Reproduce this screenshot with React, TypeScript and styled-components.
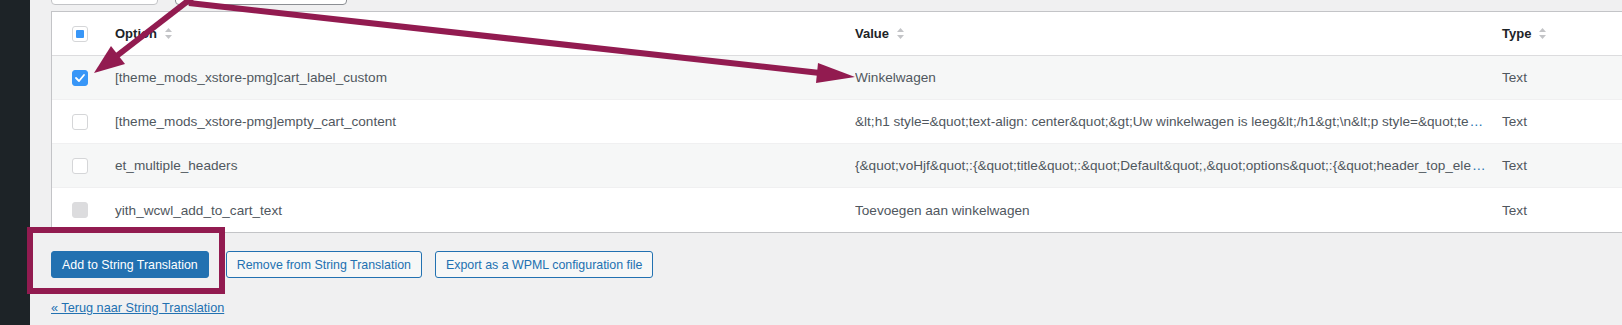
import styled, { createGlobalStyle } from 'styled-components';

const GlobalStyle = createGlobalStyle`
  html, body {
    margin: 0;
    padding: 0;
  }
  body {
    background: #f0f0f1;
    font-family: 'Liberation Sans', Arial, sans-serif;
    font-size: 13px;
    color: #50575e;
    overflow: hidden;
  }
`;

type CheckState = 'checked' | 'empty' | 'disabled';

type Row = {
  option: string;
  value: string;
  truncated?: boolean;
  type: string;
  state: CheckState;
  striped: boolean;
};

const rows: Row[] = [
  {
    option: '[theme_mods_xstore-pmg]cart_label_custom',
    value: 'Winkelwagen',
    type: 'Text',
    state: 'checked',
    striped: true,
  },
  {
    option: '[theme_mods_xstore-pmg]empty_cart_content',
    value:
      '&lt;h1 style=&quot;text-align: center&quot;&gt;Uw winkelwagen is leeg&lt;/h1&gt;\\n&lt;p style=&quot;te',
    truncated: true,
    type: 'Text',
    state: 'empty',
    striped: false,
  },
  {
    option: 'et_multiple_headers',
    value:
      '{&quot;voHjf&quot;:{&quot;title&quot;:&quot;Default&quot;,&quot;options&quot;:{&quot;header_top_ele',
    truncated: true,
    type: 'Text',
    state: 'empty',
    striped: true,
  },
  {
    option: 'yith_wcwl_add_to_cart_text',
    value: 'Toevoegen aan winkelwagen',
    type: 'Text',
    state: 'disabled',
    striped: false,
  },
];

const SortIcon = () => (
  <SortSvg width="7" height="11" viewBox="0 0 7 11">
    <path d="M3.5 0 L7 4 L0 4 Z" fill="#c3c4c7" />
    <path d="M3.5 11 L7 7 L0 7 Z" fill="#c3c4c7" />
  </SortSvg>
);

const Checkbox = ({ state }: { state: CheckState | 'mixed' }) => (
  <Box $state={state}>
    {state === 'checked' && (
      <svg width="12" height="10" viewBox="0 0 12 10">
        <path
          d="M2 5 L5 8 L10 2"
          fill="none"
          stroke="#fff"
          strokeWidth="1.8"
          strokeLinecap="round"
          strokeLinejoin="round"
        />
      </svg>
    )}
    {state === 'mixed' && <MixedDot />}
  </Box>
);

export default function App() {
  return (
    <>
      <GlobalStyle />
      <Page>
        <Sidebar />
        <Main>
          <TopBar>
            <FilterBox $w={107} />
            <FilterBox $w={172} $dark />
          </TopBar>
          <Table>
            <HeaderRow>
              <CheckCell>
                <Checkbox state="mixed" />
              </CheckCell>
              <HeadCell>
                Option <SortIcon />
              </HeadCell>
              <HeadCell>
                Value <SortIcon />
              </HeadCell>
              <HeadCell>
                Type <SortIcon />
              </HeadCell>
            </HeaderRow>
            {rows.map((r) => (
              <BodyRow key={r.option} $striped={r.striped}>
                <CheckCell>
                  <Checkbox state={r.state} />
                </CheckCell>
                <Cell>{r.option}</Cell>
                <Cell>
                  <ValueText>{r.value}</ValueText>
                  {r.truncated && <More>…</More>}
                </Cell>
                <Cell>{r.type}</Cell>
              </BodyRow>
            ))}
          </Table>
          <Actions>
            <Button $primary>Add to String Translation</Button>
            <Button>Remove from String Translation</Button>
            <Button>Export as a WPML configuration file</Button>
          </Actions>
          <BackLink href="#">« Terug naar String Translation</BackLink>
        </Main>
        <Highlight />
        <Arrows width="1622" height="325" viewBox="0 0 1622 325">
          <line x1="193" y1="-3" x2="116" y2="56.5" stroke="#921b50" strokeWidth="6" />
          <polygon points="94,73 125,64 111,46" fill="#921b50" />
          <line x1="189" y1="3" x2="820" y2="73" stroke="#921b50" strokeWidth="6" />
          <polygon points="855,77 816,83 818,63" fill="#921b50" />
        </Arrows>
      </Page>
    </>
  );
}

const Page = styled.div`
  position: relative;
  display: flex;
  height: 325px;
  overflow: hidden;
`;

const Sidebar = styled.div`
  width: 30px;
  flex-shrink: 0;
  background: #1d2327;
`;

const Main = styled.div`
  flex: 1;
  min-width: 0;
  padding-left: 21px;
`;

const TopBar = styled.div`
  display: flex;
  gap: 17px;
  height: 30px;
  margin-top: -25px;
`;

const FilterBox = styled.div<{ $w: number; $dark?: boolean }>`
  width: ${(p) => p.$w}px;
  height: 30px;
  box-sizing: border-box;
  background: #fff;
  border: 1px solid ${(p) => (p.$dark ? '#8c8f94' : '#c3c4c7')};
  border-radius: 4px;
`;

const Table = styled.div`
  margin-top: 6px;
  margin-right: -20px;
  background: #fff;
  border: 1px solid #c3c4c7;
`;

const gridCols = '63px 740px 647px 1fr';

const HeaderRow = styled.div`
  display: grid;
  grid-template-columns: ${gridCols};
  height: 44px;
  box-sizing: border-box;
  border-bottom: 1px solid #dcdcde;
  align-items: center;
`;

const BodyRow = styled.div<{ $striped: boolean }>`
  display: grid;
  grid-template-columns: ${gridCols};
  height: 44px;
  box-sizing: border-box;
  align-items: center;
  font-size: 13.6px;
  background: ${(p) => (p.$striped ? '#f6f7f7' : '#fff')};
  border-bottom: 1px solid #f0f0f1;
  &:last-child {
    border-bottom: none;
  }
`;

const CheckCell = styled.div`
  padding-left: 20px;
  display: flex;
  align-items: center;
`;

const HeadCell = styled.div`
  display: flex;
  align-items: center;
  gap: 8px;
  color: #1d2327;
  font-weight: 600;
`;

const Cell = styled.div`
  display: flex;
  align-items: center;
  white-space: nowrap;
  min-width: 0;
`;

const ValueText = styled.span`
  max-width: 624px;
  overflow: hidden;
  white-space: nowrap;
`;

const More = styled.span`
  color: #2271b1;
  margin-left: 1px;
`;

const SortSvg = styled.svg`
  display: block;
`;

const Box = styled.div<{ $state: CheckState | 'mixed' }>`
  width: 16px;
  height: 16px;
  box-sizing: border-box;
  border-radius: 3px;
  display: flex;
  align-items: center;
  justify-content: center;
  background: ${(p) =>
    p.$state === 'checked' ? '#3896f7' : p.$state === 'disabled' ? '#dcdcde' : '#fff'};
  border: 1px solid
    ${(p) =>
      p.$state === 'checked' ? '#3896f7' : p.$state === 'disabled' ? '#dcdcde' : '#d5d6d8'};
`;

const MixedDot = styled.div`
  width: 8px;
  height: 8px;
  background: #3896f7;
  border-radius: 1px;
`;

const Actions = styled.div`
  display: flex;
  gap: 13px;
  margin-top: 18px;
`;

const Button = styled.button<{ $primary?: boolean }>`
  height: 27px;
  padding: 0 10px;
  border-radius: 3px;
  font-family: inherit;
  font-size: 12.4px;
  border: 1px solid #2271b1;
  background: ${(p) => (p.$primary ? '#2271b1' : '#f6f7f7')};
  color: ${(p) => (p.$primary ? '#fff' : '#2271b1')};
  &:first-child {
    margin-right: 4px;
  }
`;

const BackLink = styled.a`
  display: inline-block;
  margin-top: 22px;
  color: #2271b1;
  font-size: 12.7px;
  text-decoration: underline;
  line-height: 16px;
`;

const Highlight = styled.div`
  position: absolute;
  left: 27px;
  top: 227px;
  width: 198px;
  height: 67px;
  box-sizing: border-box;
  border: 6px solid #921b50;
  pointer-events: none;
`;

const Arrows = styled.svg`
  position: absolute;
  left: 0;
  top: 0;
  pointer-events: none;
`;
